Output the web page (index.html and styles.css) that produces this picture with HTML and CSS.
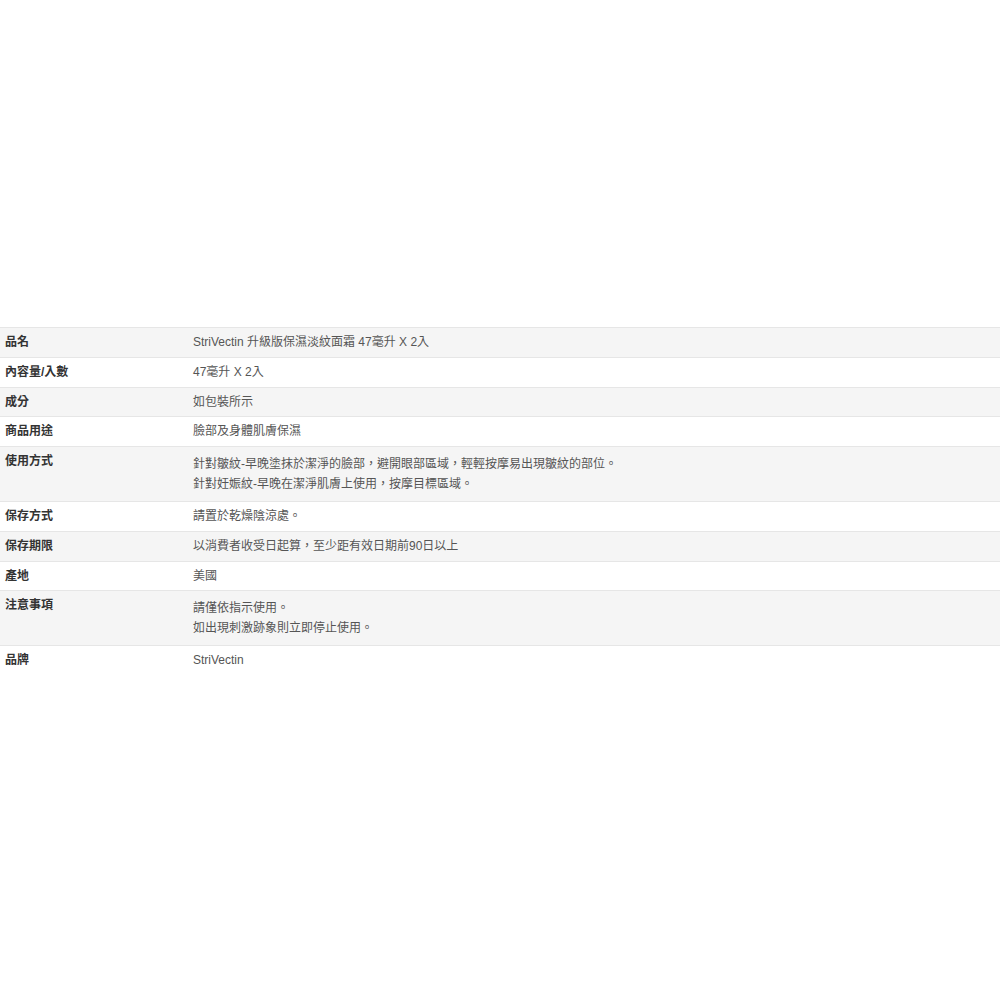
FILE: index.html
```html
<!DOCTYPE html>
<html lang="zh-Hant">
<head>
<meta charset="utf-8">
<title>商品規格</title>
<link rel="stylesheet" href="styles.css">
</head>
<body>
<div class="page">
  <table class="spec">
    <tbody>
      <tr><th>品名</th><td>StriVectin 升級版保濕淡紋面霜 47毫升 X 2入</td></tr>
      <tr><th>內容量/入數</th><td>47毫升 X 2入</td></tr>
      <tr><th>成分</th><td>如包裝所示</td></tr>
      <tr><th>商品用途</th><td>臉部及身體肌膚保濕</td></tr>
      <tr><th>使用方式</th><td><div class="multi">針對皺紋-早晚塗抹於潔淨的臉部，避開眼部區域，輕輕按摩易出現皺紋的部位。<br>針對妊娠紋-早晚在潔淨肌膚上使用，按摩目標區域。</div></td></tr>
      <tr><th>保存方式</th><td>請置於乾燥陰涼處。</td></tr>
      <tr><th>保存期限</th><td>以消費者收受日起算，至少距有效日期前90日以上</td></tr>
      <tr><th>產地</th><td>美國</td></tr>
      <tr><th>注意事項</th><td><div class="multi">請僅依指示使用。<br>如出現刺激跡象則立即停止使用。</div></td></tr>
      <tr><th>品牌</th><td>StriVectin</td></tr>
    </tbody>
  </table>
</div>
</body>
</html>
```
FILE: styles.css
```css
html, body {
  margin: 0;
  padding: 0;
  background: #fff;
}
.page {
  padding-top: 327px;
  font-family: "Liberation Sans", "Noto Sans CJK TC", sans-serif;
  font-size: 12px;
}
.spec {
  width: 100%;
  border-collapse: collapse;
  border-top: 1px solid #e6e6e6;
}
.spec tr {
  border-top: 1px solid #e6e6e6;
}
.spec tr:first-child {
  border-top: none;
}
.spec tr:nth-child(odd) {
  background: #f5f5f5;
}
.spec tr:last-child {
  background: #fff;
}
.spec th,
.spec td {
  padding: 7px 5px;
  line-height: 14.75px;
  vertical-align: top;
  text-align: left;
}
.spec th {
  width: 178px;
  font-weight: bold;
  color: #333;
}
.spec td {
  color: #555;
}
.multi {
  line-height: 20px;
}
```
